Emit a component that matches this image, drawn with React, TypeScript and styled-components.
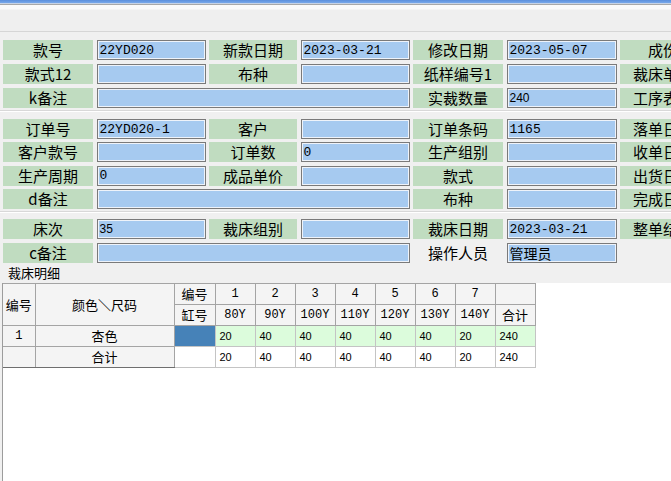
import React from "react";
import styled, { createGlobalStyle } from "styled-components";

const GlobalStyle = createGlobalStyle`
  html, body { margin: 0; padding: 0; }
  body {
    background: #f0f0f0;
    font-family: "Noto Sans CJK SC", "Noto Sans", sans-serif;
    color: #000;
    overflow: hidden;
  }
`;

const Window = styled.div`
  width: 671px;
  height: 481px;
  display: flex;
  flex-direction: column;
  overflow: hidden;
  background: #f0f0f0;
`;

const TitleEdge = styled.div`
  flex: none;
  height: 3px;
  background: linear-gradient(#5b8fdc, #78a8ea);
  border-bottom: 1px solid #c6d3e6;
`;

const Toolbar = styled.div`
  flex: none;
  height: 26px;
  border-top: 1px solid #a8a8a8;
  border-bottom: 1px solid #d6d6d6;
  background: linear-gradient(#fafafa 0, #fafafa 4px, #efefef 5px, #efefef 100%);
`;

const Form = styled.div`
  flex: none;
  display: flex;
  flex-direction: column;
  padding: 8px 0 0 3px;
`;

const Section = styled.div<{ $gap: number }>`
  display: grid;
  grid-template-columns: 90px 109px 88px 109px 90px 110px 86px 110px;
  grid-auto-rows: 20px;
  column-gap: 3.5px;
  row-gap: ${(p) => p.$gap}px;
`;

const Separator = styled.div<{ $after: number }>`
  height: 0;
  margin: 2px 0 ${(p) => p.$after}px -3px;
  border-top: 1px solid #d8d8d8;
  border-bottom: 1px solid #ffffff;
`;

const Label = styled.div<{ $plain?: boolean }>`
  background: ${(p) => (p.$plain ? "transparent" : "#c0dcc0")};
  font-size: 15px;
  line-height: 20px;
  text-align: center;
  white-space: nowrap;
  overflow: hidden;
`;

const Field = styled.div<{ $span?: number; $sans?: boolean }>`
  grid-column: span ${(p) => p.$span ?? 1};
  box-sizing: border-box;
  background: #a6caf0;
  border: 1px solid #7a7a7a;
  box-shadow: inset 0 0 0 1px #eef3fa;
  padding: 0 3px 0 2px;
  display: flex;
  align-items: center;
  white-space: nowrap;
  overflow: hidden;
  color: #000;
  font-family: ${(p) =>
    p.$sans
      ? '"Liberation Sans", Arial, sans-serif'
      : '"Liberation Mono", "Noto Sans CJK SC", monospace'};
  font-size: ${(p) => (p.$sans ? 12 : 13)}px;
`;

const FieldCjk = styled.span`
  font-family: "Noto Sans CJK SC", sans-serif;
  font-size: 14px;
`;

const Blank = styled.div``;

const Caption = styled.div`
  flex: none;
  height: 20px;
  padding: 2px 0 0 8px;
  box-sizing: border-box;
  font-size: 13px;
  line-height: 16px;
`;

const GridArea = styled.div`
  flex: 1;
  margin-left: 2px;
  background: #ffffff;
  border-left: 1px solid #9c9c9c;
`;

const Grid = styled.table`
  border-collapse: collapse;
  table-layout: fixed;
  width: 532px;
  font-size: 13px;
`;

const HeadCell = styled.th<{ $mono?: boolean }>`
  height: 20px;
  padding: 0;
  font-weight: 400;
  text-align: center;
  background: #f4f4f4;
  border: 1px solid #a4a4a4;
  font-family: ${(p) =>
    p.$mono ? '"Liberation Mono", monospace' : '"Noto Sans CJK SC", sans-serif'};
  font-size: ${(p) => (p.$mono ? 12 : 13)}px;
  &:first-child { border-left: none; }
`;

const FixedCell = styled.td<{ $mono?: boolean; $last?: boolean }>`
  height: 20px;
  padding: 0;
  text-align: center;
  background: #f4f4f4;
  border: 1px solid #a4a4a4;
  border-bottom-color: ${(p) => (p.$last ? "#6e6e6e" : "#a4a4a4")};
  font-family: ${(p) =>
    p.$mono ? '"Liberation Mono", monospace' : '"Noto Sans CJK SC", sans-serif'};
  font-size: ${(p) => (p.$mono ? 12 : 13)}px;
  &:first-child { border-left: none; }
`;

const DataCell = styled.td<{ $tone: "green" | "white" | "selected" }>`
  height: 20px;
  padding: 0 0 0 4px;
  text-align: left;
  border: 1px solid #c4c4c4;
  background: ${(p) =>
    p.$tone === "green" ? "#dcfcdc" : p.$tone === "selected" ? "#4682b8" : "#ffffff"};
  font-family: "Liberation Sans", Arial, sans-serif;
  font-size: 11px;
`;

type Cell = { label: string; value?: string; span?: number; sans?: boolean; plain?: boolean; cjk?: boolean; empty?: boolean };

const sectionOne: Cell[][] = [
  [
    { label: "款号", value: "22YD020" },
    { label: "新款日期", value: "2023-03-21" },
    { label: "修改日期", value: "2023-05-07" },
    { label: "成份", value: "" },
  ],
  [
    { label: "款式12", value: "" },
    { label: "布种", value: "" },
    { label: "纸样编号1", value: "" },
    { label: "裁床单号", value: "" },
  ],
  [
    { label: "k备注", value: "", span: 3 },
    { label: "实裁数量", value: "240", sans: true },
    { label: "工序表号", value: "" },
  ],
];

const sectionTwo: Cell[][] = [
  [
    { label: "订单号", value: "22YD020-1" },
    { label: "客户", value: "" },
    { label: "订单条码", value: "1165" },
    { label: "落单日期", value: "" },
  ],
  [
    { label: "客户款号", value: "" },
    { label: "订单数", value: "0" },
    { label: "生产组别", value: "" },
    { label: "收单日期", value: "" },
  ],
  [
    { label: "生产周期", value: "0" },
    { label: "成品单价", value: "" },
    { label: "款式", value: "" },
    { label: "出货日期", value: "" },
  ],
  [
    { label: "d备注", value: "", span: 3 },
    { label: "布种", value: "" },
    { label: "完成日期", value: "" },
  ],
];

const sectionThree: Cell[][] = [
  [
    { label: "床次", value: "35", sans: true },
    { label: "裁床组别", value: "" },
    { label: "裁床日期", value: "2023-03-21" },
    { label: "整单结束", value: "" },
  ],
  [
    { label: "c备注", value: "", span: 3 },
    { label: "操作人员", value: "管理员", plain: true, cjk: true },
    { label: "", empty: true },
  ],
];

const renderRows = (rows: Cell[][]) =>
  rows.flatMap((row, r) =>
    row.flatMap((c, i) =>
      c.empty
        ? [<Blank key={`${r}-${i}-l`} />, <Blank key={`${r}-${i}-v`} />]
        : [
            <Label key={`${r}-${i}-l`} $plain={c.plain}>
              {c.label}
            </Label>,
            <Field key={`${r}-${i}-v`} $span={c.span} $sans={c.sans}>
              {c.cjk ? <FieldCjk>{c.value}</FieldCjk> : c.value}
            </Field>,
          ]
    )
  );

const sizes = ["80Y", "90Y", "100Y", "110Y", "120Y", "130Y", "140Y"];
const qty = ["20", "40", "40", "40", "40", "40", "20", "240"];

export default function App() {
  return (
    <>
      <GlobalStyle />
      <Window>
        <TitleEdge />
        <Toolbar />
        <Form>
          <Section $gap={4}>{renderRows(sectionOne)}</Section>
          <Separator $after={7} />
          <Section $gap={3.33}>{renderRows(sectionTwo)}</Section>
          <Separator $after={6.5} />
          <Section $gap={3.33}>{renderRows(sectionThree)}</Section>
        </Form>
        <Caption>裁床明细</Caption>
        <GridArea>
          <Grid>
            <colgroup>
              <col style={{ width: 32 }} />
              <col style={{ width: 139 }} />
              <col style={{ width: 41 }} />
              {sizes.map((s) => (
                <col key={s} style={{ width: 40 }} />
              ))}
              <col style={{ width: 40 }} />
            </colgroup>
            <thead>
              <tr>
                <HeadCell rowSpan={2}>编号</HeadCell>
                <HeadCell rowSpan={2}>颜色＼尺码</HeadCell>
                <HeadCell>编号</HeadCell>
                {sizes.map((_, i) => (
                  <HeadCell key={i} $mono>
                    {i + 1}
                  </HeadCell>
                ))}
                <HeadCell />
              </tr>
              <tr>
                <HeadCell>缸号</HeadCell>
                {sizes.map((s) => (
                  <HeadCell key={s} $mono>
                    {s}
                  </HeadCell>
                ))}
                <HeadCell>合计</HeadCell>
              </tr>
            </thead>
            <tbody>
              <tr>
                <FixedCell $mono>1</FixedCell>
                <FixedCell>杏色</FixedCell>
                <DataCell $tone="selected" />
                {qty.map((q, i) => (
                  <DataCell key={i} $tone="green">
                    {q}
                  </DataCell>
                ))}
              </tr>
              <tr>
                <FixedCell $last />
                <FixedCell $last>合计</FixedCell>
                <DataCell $tone="white" />
                {qty.map((q, i) => (
                  <DataCell key={i} $tone="white">
                    {q}
                  </DataCell>
                ))}
              </tr>
            </tbody>
          </Grid>
        </GridArea>
      </Window>
    </>
  );
}
